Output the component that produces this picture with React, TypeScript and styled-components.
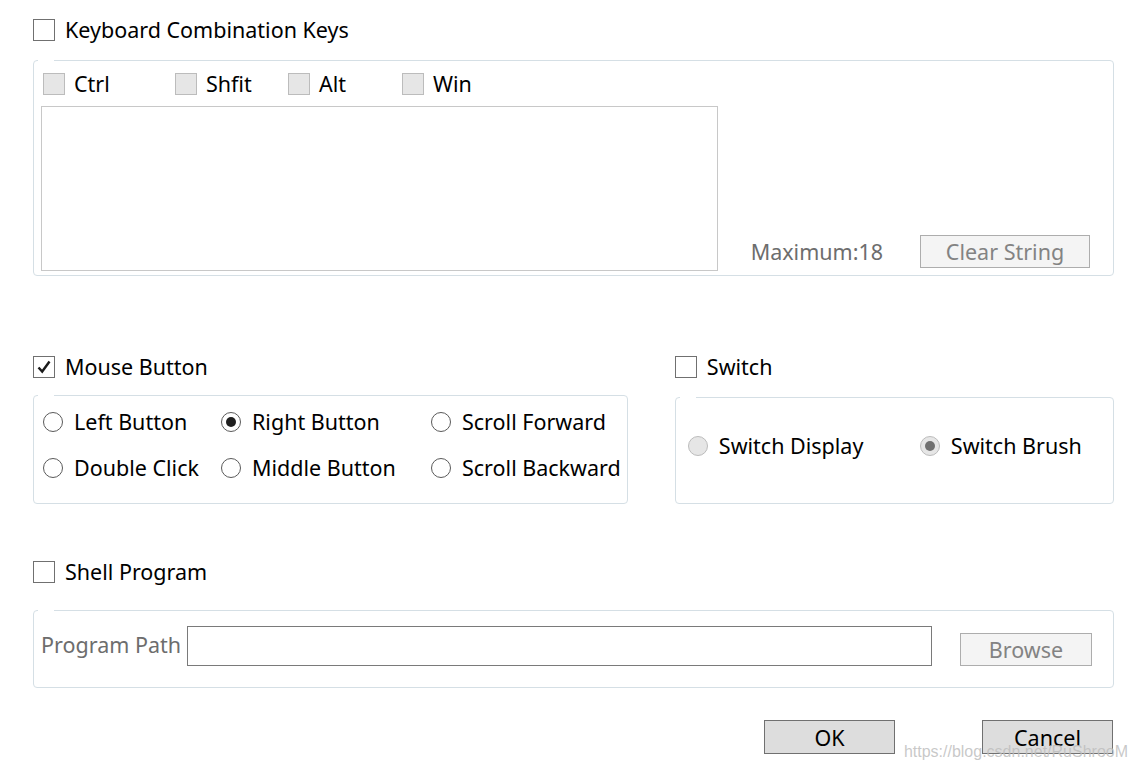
import React from "react";
import styled, { createGlobalStyle, css } from "styled-components";

const Global = createGlobalStyle`
  html, body { margin: 0; padding: 0; background: #fff; }
  body { font-family: "Noto Sans", "Open Sans", sans-serif; color: #000; }
  * { box-sizing: border-box; }
`;

const Page = styled.div`
  position: relative;
  width: 1138px;
  height: 773px;
  padding: 19px 24px 0 33px;
  overflow: hidden;
`;

const Label = styled.span<{ $muted?: boolean }>`
  font-size: 21.5px;
  line-height: 22px;
  color: ${(p) => (p.$muted ? "#6d6d6d" : "#000")};
  white-space: nowrap;
`;

const CheckRow = styled.label<{ $gap?: number }>`
  display: flex;
  align-items: center;
  gap: ${(p) => p.$gap ?? 10}px;
  height: 22px;
`;

const Box = styled.span<{ $disabled?: boolean }>`
  width: 22px;
  height: 22px;
  flex: none;
  display: flex;
  align-items: center;
  justify-content: center;
  border: 1px solid ${(p) => (p.$disabled ? "#bcbcbc" : "#707070")};
  background: ${(p) => (p.$disabled ? "#e6e6e6" : "#fff")};
`;

const Group = styled.div<{ $h: number }>`
  position: relative;
  height: ${(p) => p.$h}px;
  border: 1px solid #d5dfe5;
  border-radius: 4px;
  &::before {
    content: "";
    position: absolute;
    top: -1px;
    left: 4px;
    width: 16px;
    height: 2px;
    background: #fff;
  }
`;

const KeyGroup = styled(Group)`
  margin-top: 19px;
  display: flex;
  padding: 12px 23px 4px 7px;
`;

const KeyLeft = styled.div`
  display: flex;
  flex-direction: column;
  gap: 11px;
`;

const ModRow = styled.div`
  display: flex;
  padding-left: 2px;
`;

const ModCell = styled.div<{ $w: number }>`
  width: ${(p) => p.$w}px;
`;

const TextArea = styled.div`
  width: 677px;
  height: 166px;
  border: 1px solid #c8c8c8;
  background: #fff;
`;

const KeyRight = styled.div`
  flex: 1;
  display: flex;
  align-items: flex-end;
  justify-content: flex-end;
  gap: 37px;
  padding-bottom: 3px;
`;

const MaxText = styled(Label)`
  color: #6d6d6d;
  line-height: 32px;
`;

const DisabledButton = styled.div<{ $w: number }>`
  width: ${(p) => p.$w}px;
  height: 33px;
  display: flex;
  align-items: center;
  justify-content: center;
  border: 1px solid #adadad;
  background: #f4f4f4;
  color: #838383;
  font-size: 21.5px;
`;

const TwoCols = styled.div`
  display: flex;
  gap: 47px;
  margin-top: 80px;
`;

const Col = styled.div<{ $w: number; $gap: number }>`
  width: ${(p) => p.$w}px;
  display: flex;
  flex-direction: column;
  gap: ${(p) => p.$gap}px;
`;

const RadioGrid = styled(Group)`
  display: grid;
  grid-template-columns: 178px 210px auto;
  grid-template-rows: 22px 22px;
  row-gap: 24px;
  align-content: start;
  padding: 15px 0 0 9px;
`;

const SwitchGroup = styled(Group)`
  display: flex;
  align-items: flex-start;
  padding: 37px 0 0 12px;
`;

const RadioRow = styled.label<{ $w?: number }>`
  display: flex;
  align-items: center;
  gap: 11px;
  height: 22px;
  ${(p) =>
    p.$w &&
    css`
      width: ${p.$w}px;
    `}
`;

const Circle = styled.span<{ $disabled?: boolean }>`
  width: 20px;
  height: 20px;
  flex: none;
  border-radius: 50%;
  display: flex;
  align-items: center;
  justify-content: center;
  border: 1px solid ${(p) => (p.$disabled ? "#bcbcbc" : "#5a5a5a")};
  background: ${(p) => (p.$disabled ? "#e6e6e6" : "#fff")};
`;

const Dot = styled.span<{ $disabled?: boolean }>`
  width: 10px;
  height: 10px;
  border-radius: 50%;
  background: ${(p) => (p.$disabled ? "#707070" : "#1f1f1f")};
`;

const ShellHeader = styled.div`
  margin-top: 57px;
`;

const PathGroup = styled(Group)`
  margin-top: 27px;
  display: flex;
  align-items: flex-start;
  padding: 15px 21px 0 7px;
`;

const PathLabel = styled(Label)`
  color: #6d6d6d;
  width: 146px;
  margin-top: 8px;
`;

const PathInput = styled.div`
  width: 745px;
  height: 40px;
  border: 1px solid #7a7a7a;
`;

const BrowseWrap = styled.div`
  margin-left: auto;
  margin-top: 7px;
`;

const Footer = styled.div`
  display: flex;
  justify-content: flex-end;
  gap: 87px;
  margin-top: 32px;
  padding-right: 1px;
`;

const Button = styled.div`
  width: 131px;
  height: 34px;
  display: flex;
  align-items: center;
  justify-content: center;
  border: 1px solid #707070;
  background: #dddddd;
  font-size: 21.5px;
  color: #000;
`;

const Watermark = styled.div`
  position: absolute;
  right: 10px;
  bottom: 12px;
  font-family: "Liberation Sans", Arial, sans-serif;
  font-size: 16px;
  color: rgba(190, 190, 190, 0.85);
  white-space: nowrap;
`;

const Check = () => (
  <svg width="16" height="16" viewBox="0 0 16 16">
    <path d="M2.5 8.5 L6.2 12.5 L13.5 2.5" fill="none" stroke="#1a1a1a" strokeWidth="2.4" />
  </svg>
);

const CheckBox: React.FC<{ label: string; checked?: boolean; disabled?: boolean; gap?: number }> = ({
  label,
  checked,
  disabled,
  gap,
}) => (
  <CheckRow $gap={gap}>
    <Box $disabled={disabled}>{checked && <Check />}</Box>
    <Label>{label}</Label>
  </CheckRow>
);

const Radio: React.FC<{ label: string; checked?: boolean; disabled?: boolean; w?: number }> = ({
  label,
  checked,
  disabled,
  w,
}) => (
  <RadioRow $w={w}>
    <Circle $disabled={disabled}>{checked && <Dot $disabled={disabled} />}</Circle>
    <Label>{label}</Label>
  </RadioRow>
);

export default function App() {
  return (
    <>
      <Global />
      <Page>
        <CheckBox label="Keyboard Combination Keys" />
        <KeyGroup $h={216}>
          <KeyLeft>
            <ModRow>
              <ModCell $w={132}>
                <CheckBox label="Ctrl" disabled gap={9} />
              </ModCell>
              <ModCell $w={113}>
                <CheckBox label="Shfit" disabled gap={9} />
              </ModCell>
              <ModCell $w={114}>
                <CheckBox label="Alt" disabled gap={9} />
              </ModCell>
              <ModCell $w={100}>
                <CheckBox label="Win" disabled gap={9} />
              </ModCell>
            </ModRow>
            <TextArea />
          </KeyLeft>
          <KeyRight>
            <MaxText>Maximum:18</MaxText>
            <DisabledButton $w={170}>Clear String</DisabledButton>
          </KeyRight>
        </KeyGroup>

        <TwoCols>
          <Col $w={596} $gap={17}>
            <CheckBox label="Mouse Button" checked />
            <RadioGrid $h={109}>
              <Radio label="Left Button" />
              <Radio label="Right Button" checked />
              <Radio label="Scroll Forward" />
              <Radio label="Double Click" />
              <Radio label="Middle Button" />
              <Radio label="Scroll Backward" />
            </RadioGrid>
          </Col>
          <Col $w={440} $gap={19}>
            <CheckBox label="Switch" />
            <SwitchGroup $h={107}>
              <Radio label="Switch Display" disabled w={232} />
              <Radio label="Switch Brush" disabled checked />
            </SwitchGroup>
          </Col>
        </TwoCols>

        <ShellHeader>
          <CheckBox label="Shell Program" />
        </ShellHeader>
        <PathGroup $h={78}>
          <PathLabel>Program Path</PathLabel>
          <PathInput />
          <BrowseWrap>
            <DisabledButton $w={132}>Browse</DisabledButton>
          </BrowseWrap>
        </PathGroup>

        <Footer>
          <Button>OK</Button>
          <Button>Cancel</Button>
        </Footer>
        <Watermark>https://blog.csdn.net/RuShrooM</Watermark>
      </Page>
    </>
  );
}
